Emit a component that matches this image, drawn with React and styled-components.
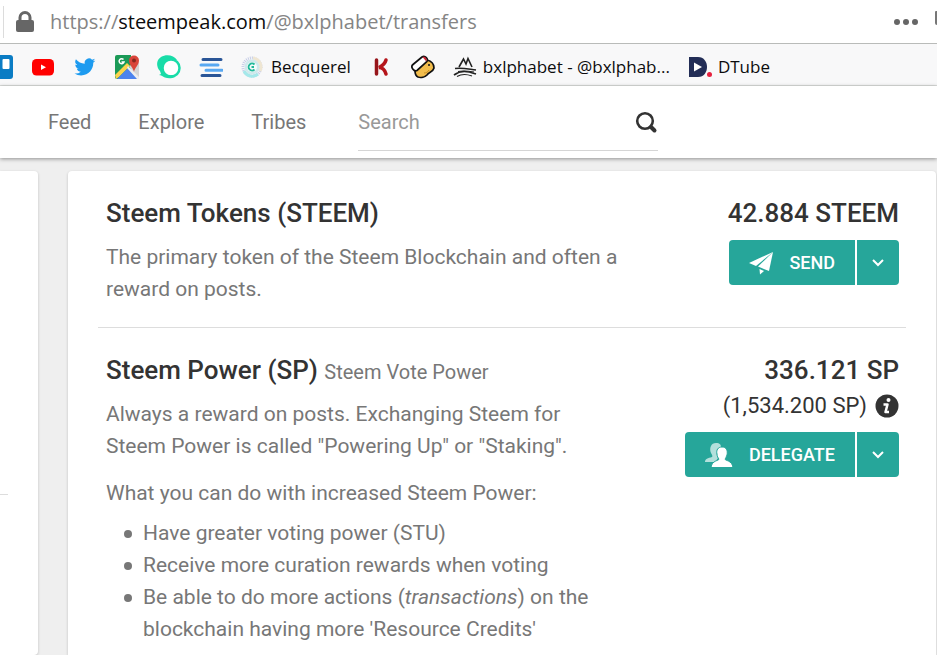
import { useState } from 'react'
import styled, { createGlobalStyle } from 'styled-components'

const GlobalStyle = createGlobalStyle`
    * {
        box-sizing: border-box;
    }
    body {
        margin: 0;
        background: #efefef;
        color: #777;
        font-family: Roboto, "Liberation Sans", sans-serif;
        font-size: 20px;
    }
`

const Page = styled.div`
    display: flex;
    flex-direction: column;
    min-height: 100vh;
    overflow: hidden;
`

// browser chrome
const AddressBar = styled.div`
    display: flex;
    align-items: center;
    height: 44px;
    padding-left: 3px;
    background: #fff;
    border-bottom: 1px solid #b9bbb9;
    overflow: hidden;
`
const AddressDivider = styled.span`
    width: 1px;
    height: 32px;
    margin-right: 12px;
    background: #dcdcdc;
`
const Address = styled.div`
    flex: 1;
    margin-left: 16px;
    color: #858585;
    font-family: "Open Sans", "Noto Sans", sans-serif;
    font-size: 20px;
    line-height: 28px;
    white-space: nowrap;
    outline: none;
`
const Host = styled.span`
    color: #0c0c0d;
`
const ChromeButton = styled.button`
    display: flex;
    padding: 0;
    border: 0;
    background: none;
    color: #666;
`
const PocketEdge = styled.span`
    width: 2px;
    height: 14px;
    margin: 0 0 8px 17px;
    background: #777;
    border-radius: 2px 0 0 4px;
`

const Bookmarks = styled.nav`
    display: flex;
    gap: 18px;
    height: 42px;
    margin-left: -11px;
    padding-top: 11px;
    background: #f8f8f9;
    border-bottom: 1px solid #dddfdd;
`
const Bookmark = styled.a`
    display: flex;
    flex: none;
    align-items: center;
    gap: 6px;
    height: 24px;
    color: #0c0c0d;
    font-family: "Open Sans", "Noto Sans", sans-serif;
    font-size: 17px;
    line-height: 24px;
    text-decoration: none;
    white-space: nowrap;
`

// site header
const Header = styled.header`
    position: relative;
    display: flex;
    align-items: center;
    height: 72px;
    padding: 0 48px;
    background: #fff;
    box-shadow: 0 1px 4px rgba(0,0,0,.4);
`
const Menu = styled.nav`
    display: flex;
    gap: 47px;
    margin-right: 52px;
`
const MenuLink = styled.a`
    color: #777;
    line-height: 32px;
    text-decoration: none;
`
const SearchForm = styled.form`
    display: flex;
    align-items: center;
    width: 300px;
    height: 57px;
    border-bottom: 1px solid #d5d5d5;
`
const SearchInput = styled.input`
    flex: 1;
    min-width: 0;
    padding: 0;
    border: 0;
    outline: none;
    background: none;
    color: #333;
    font: inherit;

    &::placeholder {
        color: #999;
        opacity: 1;
    }
`
const SearchButton = styled.button`
    display: flex;
    padding: 0;
    border: 0;
    background: none;
`

// content
const Columns = styled.main`
    display: flex;
    flex: 1;
    gap: 30px;
    padding: 13px 1px 0 0;
`
const Card = styled.section`
    background: #fff;
    box-shadow: 0 1px 3px rgba(0,0,0,.2);
`
const SideCard = styled(Card)`
    flex: none;
    width: 38px;
    padding-top: 323px;
    border-radius: 0 4px 4px 0;
`
const SideRule = styled.hr`
    width: 8px;
    height: 1px;
    margin: 0;
    border: 0;
    background: #ddd;
`
const WalletCard = styled(Card)`
    flex: 1;
    min-width: 0;
    padding: 0 30px;
    border-radius: 4px 4px 0 0;
`
const TokenRow = styled.article`
    display: grid;
    grid-template-columns: minmax(0, 65fr) minmax(0, 35fr);
    padding: 26px 7px ${({$last}) => $last ? '8px' : '22px'} 8px;
    border-bottom: ${({$last}) => $last ? '0' : '1px solid #ddd'};
`
const TokenName = styled.h2`
    margin: 0 0 12px;
    color: #333;
    font-size: 26px;
    font-weight: 500;
    line-height: 32px;
`
const TokenHint = styled.small`
    color: #777;
    font-size: 20px;
    font-weight: 400;
    line-height: 20px;
`
const Text = styled.p`
    margin: 0;
    font-size: 21px;
    line-height: 32px;

    & + & {
        margin-top: 15px;
    }
`
const PerkList = styled.ul`
    margin: 8px 0 0;
    padding-left: 37px;
    font-size: 21px;
    line-height: 32px;
    list-style: none;
`
const Perk = styled.li`
    &::before {
        content: '';
        display: inline-block;
        width: 8px;
        height: 8px;
        margin: 0 11px 0 -19px;
        border-radius: 50%;
        background: #777;
        vertical-align: middle;
    }
`
const Balance = styled.div`
    display: flex;
    flex-direction: column;
    align-items: flex-end;
    color: #333;
    white-space: nowrap;
`
const Amount = styled.strong`
    font-size: 26px;
    font-weight: 500;
    line-height: 32px;
`
const SubAmount = styled.span`
    display: flex;
    align-items: center;
    gap: 8px;
    margin-top: 5px;
    font-size: 22px;
    line-height: 30px;
`
const ButtonGroup = styled.div`
    display: flex;
    gap: 2px;
    margin-top: 11px;
`
const ActionButton = styled.button`
    display: flex;
    align-items: center;
    gap: 16px;
    height: 45px;
    padding: 0 20px;
    border: 0;
    border-radius: 4px 0 0 4px;
    background: #26a69a;
    color: #fff;
    font-family: inherit;
    font-size: 18px;
    font-weight: 500;
    text-transform: uppercase;
`
const CaretButton = styled(ActionButton)`
    justify-content: center;
    width: 42px;
    padding: 0;
    border-radius: 0 4px 4px 0;
`

const Icon = ({size = 24, width, children}) => (
    <svg width={width || size} height={size} viewBox={`0 0 ${width || size} ${size}`} fill="none" aria-hidden="true">
        {children}
    </svg>
)

const LockIcon = () => (
    <Icon size={22} width={18}>
        <path d="M4 10V6.500a5 5 0 0 1 10 0V10" stroke="#666" strokeWidth="3" />
        <rect y="9" width="18" height="12" rx="2" fill="#666" />
    </Icon>
)

const TrelloIcon = () => (
    <Icon>
        <rect width="24" height="24" rx="3" fill="#0b7cc4" />
        <rect x="3" y="4" width="7" height="16" rx="1" fill="#fff" />
        <rect x="13.500" y="4" width="7" height="10" rx="1" fill="#fff" />
    </Icon>
)

const YoutubeIcon = () => (
    <Icon>
        <rect x="1" y="4" width="22" height="16.500" rx="4.500" fill="#f00" />
        <path d="M10 9.500v5.500l5-2.750z" fill="#fff" />
    </Icon>
)

const TwitterIcon = () => (
    <Icon>
        <path transform="translate(1.500 1.500) scale(.87)" fill="#1d9bf0" d="M23.950 4.570a10 10 0 0 1-2.820.770 4.960 4.960 0 0 0 2.160-2.720c-.950.550-2 .950-3.130 1.180a4.920 4.920 0 0 0-8.380 4.480C7.690 8.090 4.070 6.130 1.640 3.160a4.900 4.900 0 0 0 1.520 6.570 4.900 4.900 0 0 1-2.230-.610v.060a4.920 4.920 0 0 0 3.950 4.830 5 5 0 0 1-2.210.080 4.940 4.940 0 0 0 4.600 3.420A9.870 9.870 0 0 1 0 19.540a13.990 13.990 0 0 0 7.550 2.210c9.050 0 14-7.500 14-13.980 0-.210 0-.420-.020-.630a9.940 9.940 0 0 0 2.420-2.570z" />
    </Icon>
)

const MapsIcon = () => (
    <Icon>
        <path d="M2 0h14v24H2a2 2 0 0 1-2-2V2a2 2 0 0 1 2-2z" fill="#1b9a57" />
        <path d="M14 11 24 7v15l-3 2z" fill="#d5d5d5" />
        <path d="M0 20 12 8l3 3L4 22l-3 2z" fill="#fbd34d" />
        <path d="M2 24 13 13l10 11z" fill="#4c83ee" />
        <path d="M13 11l11 11v2h-2L12 13z" fill="#eee" />
        <path d="M19 17c-.500-4-5-7-5-11.500a5 5 0 0 1 10 0C24 10 19.500 13 19 17z" fill="#d9453a" />
        <circle cx="19" cy="5.500" r="2" fill="#86281f" />
        <path d="M8.500 4.500A2.500 2.500 0 1 0 9 7H6.500" stroke="#fff" strokeWidth="1.500" />
    </Icon>
)

const SteemIcon = () => (
    <Icon>
        <path d="M3 16C-1 12-1 5 4 2c5-3 13-2 16 3l-6 1-7 5-1 5 1 5-5-1 2-1z" fill="#19dca8" />
        <circle cx="14" cy="13" r="8.500" fill="#fff" stroke="#19dca8" strokeWidth="2.500" />
        <path d="M4 20c4 4 10 4 14 2l-3-2c-3 1-6 0-8-2z" fill="#19dca8" />
    </Icon>
)

const BusyIcon = () => (
    <Icon>
        <path d="M4 4.500h18M3 20.500h18" stroke="#2a5597" strokeWidth="3" strokeLinecap="round" />
        <path d="M2 10h17M7 15.200h16" stroke="#58a8f2" strokeWidth="3" strokeLinecap="round" />
    </Icon>
)

const BecquerelIcon = () => (
    <Icon>
        <circle cx="11" cy="12" r="9" stroke="#b9c2e2" strokeWidth="3" strokeDasharray="1 1" opacity=".8" />
        <path d="M12 3a9 9 0 0 1 7 13" stroke="#efe6d2" strokeWidth="3" />
        <path d="M3 16a9 9 0 0 0 14 3" stroke="#a5e8ea" strokeWidth="3" />
        <circle cx="11" cy="12" r="7.500" fill="#cfe9ec" />
        <circle cx="11" cy="12" r="5" fill="#f4fbfb" />
        <path d="M13.500 9.500a3.500 3.500 0 1 0 0 5M13 12h-2.500" stroke="#22b99a" strokeWidth="1.800" />
    </Icon>
)

const KIcon = () => (
    <Icon>
        <path d="M7.500 5v14" stroke="#96151b" strokeWidth="3.500" strokeLinecap="round" />
        <path d="M17 5c-1 4-4 6-7 7.500 4 0 6 3 7 6.500" stroke="#b5151b" strokeWidth="3.500" strokeLinecap="round" />
    </Icon>
)

const HornIcon = () => (
    <Icon>
        <path d="m4 16 12-11c4 1 7 4 7 8-1 4-5 4-7 7-2 2-6 3-9 2-2-1-3-3-3-6z" fill="#f2bd4d" stroke="#111" strokeWidth="1.700" strokeLinejoin="round" />
        <path d="M2 9.500 11 2c3-2 7 2 4.500 5L6 15.500C3 17-1 12 2 9.500z" fill="#fff" stroke="#111" strokeWidth="1.700" />
        <path d="M11.500 2c3-1 5 2 3.800 4.500z" fill="#d02536" />
        <circle cx="18" cy="10" r="1" fill="#111" />
        <path d="M13 18c2 0 4-1 5-3" stroke="#c98e22" />
    </Icon>
)

const HillsIcon = () => (
    <Icon>
        <path d="m6 12 4.500-8 2.500 5 2-5.500 4 8.500" stroke="#222" strokeWidth="1.600" />
        <path d="M2 13.500c7-1 13 .500 21 1.500M1 20c7-5 13-4 22-1" stroke="#222" strokeWidth="1.700" />
        <path d="M5 16.500c5-1 10-.500 16 .500M4 21.500c5-3 11-2 15-.500" stroke="#222" strokeWidth="1.200" />
    </Icon>
)

const DtubeIcon = () => (
    <Icon>
        <path d="M1 2h9c12 0 12 20 0 20H1z" fill="#222d56" />
        <path d="M6 7.500v9l8-4.500z" fill="#fff" />
        <circle cx="22" cy="19.500" r="3.500" fill="#f8f8f9" />
        <circle cx="21.500" cy="19.500" r="2.500" fill="#e6213f" />
    </Icon>
)

const SearchIcon = () => (
    <Icon>
        <circle cx="11" cy="11" r="7.800" stroke="#333" strokeWidth="2.600" />
        <path d="m17 17 3.500 3.500" stroke="#333" strokeWidth="4" strokeLinecap="round" />
    </Icon>
)

const PlaneIcon = () => (
    <Icon>
        <path d="M24 1 0 12l7 3z" fill="#fff" />
        <path d="M24 1 9 15.500 20 20z" fill="#fff" />
        <path d="m10.500 18 4.500 2-4 3.500z" fill="#fff" />
    </Icon>
)

const PeopleIcon = () => (
    <Icon width={28}>
        <path d="M11 0c4 0 5 2 5 4-5 1-5 7-3 11l-3 4H0c0-3 3-4 7-5 1-1 0-2-1-4-2-5 0-10 5-10z" fill="#fff" opacity=".65" />
        <path d="M17 4c4 0 6 3 5 8-1 2-1 3-2 4 0 2 7 1 8 8.500H6c1-7.500 8-6.500 8-8.500-1-1-2-3-2-5-1-4 1-7 5-7z" fill="#fff" stroke="#26a69a" strokeWidth="1" />
    </Icon>
)

const CaretIcon = () => (
    <Icon size={12}>
        <path d="m1 3 5 5 5-5" stroke="#fff" strokeWidth="2" />
    </Icon>
)

const InfoIcon = () => (
    <Icon>
        <circle cx="12" cy="12" r="11.500" fill="#333" />
        <circle cx="13.500" cy="6" r="2" fill="#fff" />
        <path d="M8.500 10.500h4L10.500 18h3.500" stroke="#fff" strokeWidth="2.500" strokeLinejoin="round" />
    </Icon>
)

const bookmarks = [
    { name: 'Trello', icon: <TrelloIcon /> },
    { name: 'YouTube', icon: <YoutubeIcon /> },
    { name: 'Twitter', icon: <TwitterIcon /> },
    { name: 'Google Maps', icon: <MapsIcon /> },
    { name: 'Steemit', icon: <SteemIcon /> },
    { name: 'Busy', icon: <BusyIcon /> },
    { name: 'Becquerel', icon: <BecquerelIcon />, label: 'Becquerel' },
    { name: 'K', icon: <KIcon /> },
    { name: 'Horn', icon: <HornIcon /> },
    { name: 'bxlphabet', icon: <HillsIcon />, label: 'bxlphabet - @bxlphab...' },
    { name: 'DTube', icon: <DtubeIcon />, label: 'DTube' }
]

const SplitButton = ({icon, children}) => (
    <ButtonGroup>
        <ActionButton type="button">{icon}{children}</ActionButton>
        <CaretButton type="button" aria-label={`More ${children} options`}>
            <CaretIcon />
        </CaretButton>
    </ButtonGroup>
)

const App = () => {
    const [query, setQuery] = useState('')

    const handleSearch = (e) => {
        e.preventDefault()
    }

    return (
        <Page>
            <GlobalStyle />
            <AddressBar>
                <AddressDivider />
                <LockIcon />
                <Address role="textbox" aria-label="Address" tabIndex={0}>
                    https://<Host>steempeak.com</Host>/@bxlphabet/transfers
                </Address>
                <ChromeButton type="button" aria-label="Page actions">
                    <Icon size={6} width={24}>
                        <circle cx="3" cy="3" r="3" fill="#666" />
                        <circle cx="12" cy="3" r="3" fill="#666" />
                        <circle cx="21" cy="3" r="3" fill="#666" />
                    </Icon>
                </ChromeButton>
                <PocketEdge />
            </AddressBar>
            <Bookmarks aria-label="Bookmarks">
                {bookmarks.map(({name, icon, label}) => (
                    <Bookmark key={name} href="#" aria-label={name}>
                        {icon}
                        {label}
                    </Bookmark>
                ))}
            </Bookmarks>
            <Header>
                <Menu>
                    <MenuLink href="#">Feed</MenuLink>
                    <MenuLink href="#">Explore</MenuLink>
                    <MenuLink href="#">Tribes</MenuLink>
                </Menu>
                <SearchForm onSubmit={handleSearch}>
                    <SearchInput
                    aria-label="Search"
                    placeholder="Search"
                    value={query}
                    onChange={e => setQuery(e.target.value)}/>
                    <SearchButton aria-label="Submit search">
                        <SearchIcon />
                    </SearchButton>
                </SearchForm>
            </Header>
            <Columns>
                <SideCard>
                    <SideRule />
                </SideCard>
                <WalletCard>
                    <TokenRow>
                        <div>
                            <TokenName>Steem Tokens (STEEM)</TokenName>
                            <Text>The primary token of the Steem Blockchain and often a reward on posts.</Text>
                        </div>
                        <Balance>
                            <Amount>42.884 STEEM</Amount>
                            <SplitButton icon={<PlaneIcon />}>Send</SplitButton>
                        </Balance>
                    </TokenRow>
                    <TokenRow $last>
                        <div>
                            <TokenName>
                                Steem Power (SP) <TokenHint>Steem Vote Power</TokenHint>
                            </TokenName>
                            <Text>
                                Always a reward on posts. Exchanging Steem for Steem Power
                                is called "Powering Up" or "Staking".
                            </Text>
                            <Text>What you can do with increased Steem Power:</Text>
                            <PerkList>
                                <Perk>Have greater voting power (STU)</Perk>
                                <Perk>Receive more curation rewards when voting</Perk>
                                <Perk>
                                    Be able to do more actions (<em>transactions</em>) on the
                                    blockchain having more 'Resource Credits'
                                </Perk>
                            </PerkList>
                        </div>
                        <Balance>
                            <Amount>336.121 SP</Amount>
                            <SubAmount>(1,534.200 SP) <InfoIcon /></SubAmount>
                            <SplitButton icon={<PeopleIcon />}>Delegate</SplitButton>
                        </Balance>
                    </TokenRow>
                </WalletCard>
            </Columns>
        </Page>
    )
}
export default App
